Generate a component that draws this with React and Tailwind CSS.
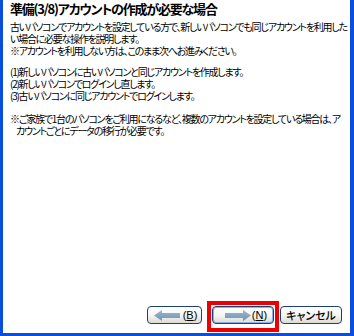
import React from 'react';

const jp = { fontFamily: '"Noto Sans CJK JP", "Noto Sans", sans-serif', fontFeatureSettings: '"palt"' };

const Arrow = ({ dir }) => (
  <svg width="26" height="11" viewBox="0 0 26 11" className="shrink-0">
    <defs>
      <linearGradient id={`ag-${dir}`} x1="0" y1="0" x2="0" y2="1">
        <stop offset="0" stopColor="#9cb8d2" />
        <stop offset="1" stopColor="#6f92b4" />
      </linearGradient>
    </defs>
    {dir === 'left' ? (
      <path d="M0 5.5 L8 0 L8 3 L26 3 L26 8 L8 8 L8 11 Z" fill={`url(#ag-${dir})`} />
    ) : (
      <path d="M26 5.5 L18 0 L18 3 L0 3 L0 8 L18 8 L18 11 Z" fill={`url(#ag-${dir})`} />
    )}
  </svg>
);

const XpButton = ({ children, className = '', focused }) => (
  <button
    type="button"
    className={`h-[18px] rounded-[4px] border border-[#1c3f78] bg-gradient-to-b from-white via-[#f6f6f3] to-[#dcdcd4] flex items-center justify-center text-[11px] text-black leading-none ${focused ? 'shadow-[inset_0_0_0_1px_#8eb0e4]' : ''} ${className}`}
    style={jp}
  >
    {children}
  </button>
);

const body = 'text-[10px] leading-[12px] whitespace-nowrap tracking-[-1.25px]';

export default function App() {
  return (
    <div className="w-[354px] h-[336px] overflow-hidden bg-white border-l-[3px] border-r-[4px] border-b-[3px] border-[#0a4ee0] flex flex-col text-black" style={jp}>
      <div className="pl-[7px] pt-[1px]">
        <div className="text-[13px] font-bold leading-[16px] h-[16px] whitespace-nowrap tracking-[-1.2px]">
          準備(3/8)アカウントの作成が必要な場合
        </div>
        <div className={`mt-[4px] ${body}`}>
          <div>古いパソコンでアカウントを設定している方で、新しいパソコンでも同じアカウントを利用した</div>
          <div>い場合に必要な操作を説明します。</div>
          <div>※アカウントを利用しない方は、このまま次へお進みください。</div>
        </div>
        <div className={`mt-[9px] ${body}`}>
          <div>(1)新しいパソコンに古いパソコンと同じアカウントを作成します。</div>
          <div>(2)新しいパソコンでログインし直します。</div>
          <div>(3)古いパソコンに同じアカウントでログインします。</div>
        </div>
        <div className={`mt-[11px] ${body}`}>
          <div>※ご家族で1台のパソコンをご利用になるなど、複数のアカウントを設定している場合は、ア</div>
          <div className="pl-[6px]">カウントごとにデータの移行が必要です。</div>
        </div>
      </div>
      <div className="flex-1" />
      <div className="flex items-start justify-end pr-[8px] pb-[1px]">
        <XpButton className="w-[55px] mt-[5px] gap-[3px] pl-[2px]">
          <Arrow dir="left" />
          <span style={{ fontFamily: '"Liberation Sans", sans-serif' }}>(<span className="underline">B</span>)</span>
        </XpButton>
        <div className="ml-[5px] border-[4px] border-[#ee0000] px-[1px] pt-[1px] pb-[4px]">
          <XpButton className="w-[62px] gap-[1px] pl-[6px]" focused>
            <Arrow dir="right" />
            <span style={{ fontFamily: '"Liberation Sans", sans-serif' }}>(<span className="underline">N</span>)</span>
          </XpButton>
        </div>
        <XpButton className="ml-[1px] mt-[5px] w-[62px] font-medium">キャンセル</XpButton>
      </div>
    </div>
  );
}
